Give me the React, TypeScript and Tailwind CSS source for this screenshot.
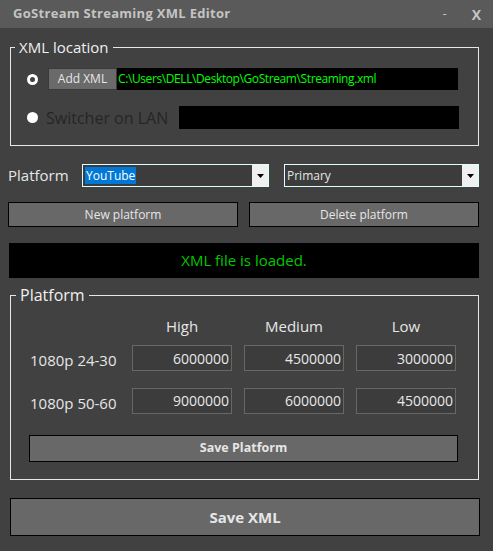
import React from 'react'

const FONT = { fontFamily: '"Open Sans", "Noto Sans", sans-serif' }

function Combo({ value, selected, width }: { value: string; selected?: boolean; width: string }) {
  return (
    <div className={`${width} h-[23px] border border-[#dffefe] bg-[#3c3c3c] flex items-stretch`}>
      <div className="flex-1 flex items-center pl-[2px] text-[12px] text-[#e6e6e6]">
        <span className={selected ? 'bg-[#0078d7] text-white leading-[17px] px-[1px]' : 'leading-[17px]'}>{value}</span>
      </div>
      <div className="w-[16px] bg-[#f0f0f0] flex items-center justify-center">
        <svg width="7" height="4" viewBox="0 0 7 4"><path d="M0 0h7L3.5 4z" fill="#000" /></svg>
      </div>
    </div>
  )
}

function Num({ v }: { v: string }) {
  return (
    <div className="h-[26px] border border-[#676767] bg-[#3c3c3c] flex items-center justify-end pr-[2px] text-[14px] text-[#e8e8e8]">
      {v}
    </div>
  )
}

export default function App() {
  return (
    <div className="w-[493px] h-[551px] bg-[#414141] flex flex-col overflow-hidden" style={FONT}>
      {/* title bar */}
      <div className="h-[28px] bg-[#5a5a5a] flex items-center pl-[13px] pr-[12px] shrink-0">
        <span className="text-[13px] font-bold text-[#c4c4c4] tracking-[0.3px]">GoStream Streaming XML Editor</span>
        <span className="ml-auto text-[13px] text-[#c4c4c4] mr-[25px]">-</span>
        <span className="text-[14px] font-bold text-[#c4c4c4]">X</span>
      </div>

      {/* XML location */}
      <fieldset className="ml-[10px] mt-[9px] w-[469px] border border-[#e6e6e6] p-0 m-0">
        <legend className="ml-[4px] px-[4px] text-[15px] leading-[20px] text-[#f0f0f0]">XML location</legend>
        <div className="pl-[16px] pt-[11px] pb-[16px] flex flex-col">
          <div className="flex items-center h-[22px]">
            <span className="w-[11px] h-[11px] rounded-full border-[3px] border-white" />
            <div className="ml-[10px] w-[69px] h-[22px] bg-[#6a6a6a] border border-[#3a3a3a] flex items-center justify-center text-[12px] text-[#e6e6e6]">
              Add XML
            </div>
            <div className="w-[341px] h-[22px] bg-black flex items-center pl-[1px] text-[12px] tracking-[-0.4px] text-[#00ff00]">
              C:\Users\DELL\Desktop\GoStream\Streaming.xml
            </div>
          </div>
          <div className="flex items-center h-[23px] mt-[16px]">
            <span className="w-[11px] h-[11px] rounded-full bg-white" />
            <span className="ml-[8px] text-[16px] text-[#262626]">Switcher on LAN</span>
            <div className="ml-auto mr-[19px] w-[280px] h-[23px] bg-black" />
          </div>
        </div>
      </fieldset>

      {/* platform select */}
      <div className="flex items-center mt-[18px] pl-[8px] h-[23px]">
        <span className="w-[74px] text-[15px] text-[#e6e6e6]">Platform</span>
        <Combo value="YouTube" selected width="w-[187px]" />
        <div className="w-[15px]" />
        <Combo value="Primary" width="w-[195px]" />
      </div>

      <div className="flex mt-[15px] pl-[8px] gap-[11px]">
        <div className="w-[230px] h-[25px] bg-[#686868] border border-black flex items-center justify-center text-[12px] text-[#e6e6e6]">New platform</div>
        <div className="w-[230px] h-[25px] bg-[#686868] border border-black flex items-center justify-center text-[12px] text-[#e6e6e6]">Delete platform</div>
      </div>

      <div className="ml-[9px] mt-[16px] w-[470px] h-[35px] bg-black flex items-center justify-center text-[15px] text-[#00c800]">
        XML file is loaded.
      </div>

      {/* Platform values */}
      <fieldset className="ml-[10px] mt-[7px] w-[469px] border border-[#e6e6e6] p-0 m-0">
        <legend className="ml-[5px] px-[4px] text-[16px] leading-[20px] text-[#f0f0f0]">Platform</legend>
        <div className="pt-[11px] pb-[17px] flex flex-col">
          <div className="grid grid-cols-[109px_100px_100px_100px] gap-x-[12px] text-[15px] text-[#e6e6e6] leading-[20px]">
            <span />
            <span className="text-center">High</span>
            <span className="text-center">Medium</span>
            <span className="text-center">Low</span>
          </div>
          <div className="grid grid-cols-[109px_100px_100px_100px] gap-x-[12px] gap-y-[16px] mt-[9px] items-center text-[15px] text-[#e6e6e6]">
            <span className="pl-[19px] pt-[4px]">1080p 24-30</span>
            <Num v="6000000" />
            <Num v="4500000" />
            <Num v="3000000" />
            <span className="pl-[19px] pt-[4px]">1080p 50-60</span>
            <Num v="9000000" />
            <Num v="6000000" />
            <Num v="4500000" />
          </div>
          <div className="ml-[18px] mt-[21px] w-[429px] h-[27px] bg-[#686868] border border-black flex items-center justify-center text-[12.5px] font-bold text-[#e6e6e6]">
            Save Platform
          </div>
        </div>
      </fieldset>

      <div className="ml-[10px] mt-[18px] w-[470px] h-[38px] bg-[#686868] border border-black flex items-center justify-center text-[15px] font-bold text-[#e6e6e6]">
        Save XML
      </div>
    </div>
  )
}
